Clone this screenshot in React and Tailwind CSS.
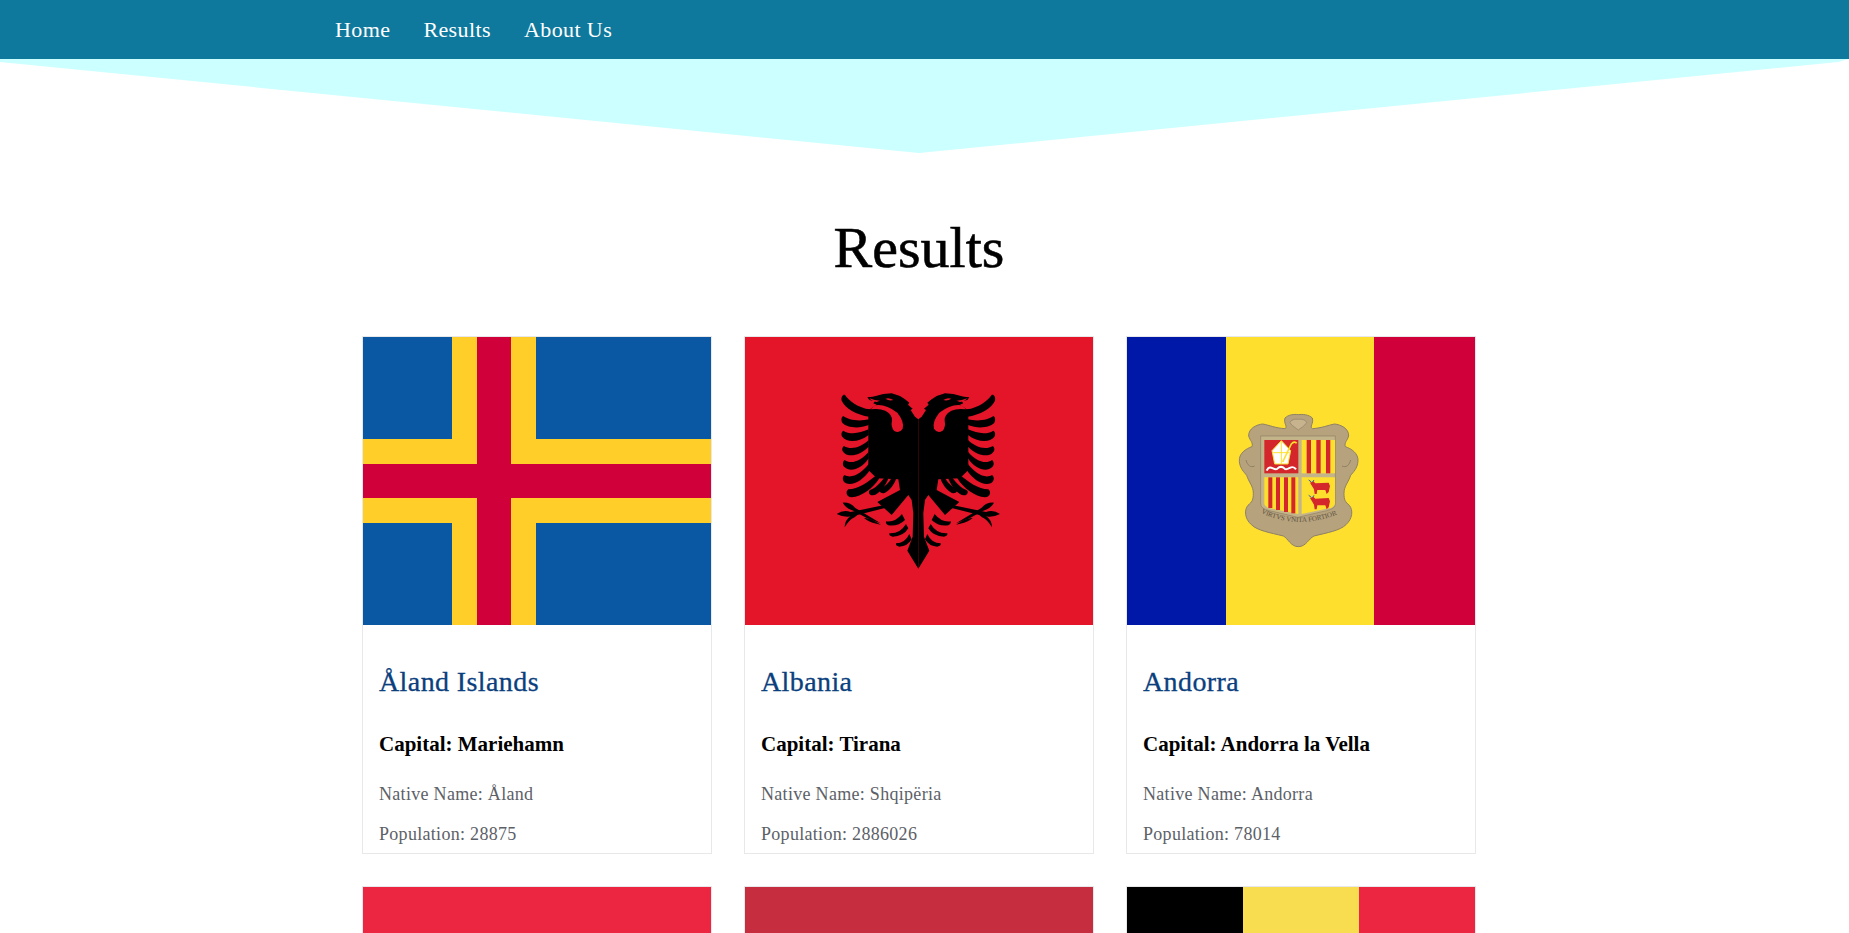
const SERIF = "font-['Liberation_Serif',serif]";

const countries = [
  { name: "Åland Islands", capital: "Mariehamn", native: "Åland", population: 28875, flag: <AlandFlag /> },
  { name: "Albania", capital: "Tirana", native: "Shqipëria", population: 2886026, flag: <AlbaniaFlag /> },
  { name: "Andorra", capital: "Andorra la Vella", native: "Andorra", population: 78014, flag: <AndorraFlag /> },
];

function AlandFlag() {
  return (
    <svg viewBox="0 0 348 288" preserveAspectRatio="none" className="block h-full w-full">
      <rect width="348" height="288" fill="#0a57a4" />
      <rect x="89" width="84" height="288" fill="#ffce29" />
      <rect y="102" width="348" height="84" fill="#ffce29" />
      <rect x="114" width="34" height="288" fill="#d0003a" />
      <rect y="127" width="348" height="34" fill="#d0003a" />
    </svg>
  );
}

// left half of the eagle, mirrored for the other side (coords are 3x)
function EagleHalf() {
  return (
    <g>
      <g fill="#000">
        {/* body, head and tail */}
        <path d="M295 118 L285 110 L272 90 L278 86 L264 74 L268 68 L255 58 L240 48 L215 40 L190 42 L170 47 L158 50 L142 52 L148 60 L165 64 L160 70 L170 74 L150 88 L145 90 L145 270 L170 295 L235 298 L240 330 L172 366 L215 405 L265 345 L275 360 L280 400 L278 470 L262 512 L295 566 Z" />
        {/* wing feathers */}
        <path d="M75 45 C85 60 115 85 150 88 L148 110 C110 105 75 85 65 62 C62 50 70 42 75 45 Z" />
        <path d="M70 108 C85 120 115 125 148 118 L146 135 C115 148 80 142 68 130 C62 122 64 110 70 108 Z" />
        <path d="M70 152 C90 165 120 160 146 148 L146 165 C118 188 80 188 68 172 C62 165 64 155 70 152 Z" />
        <path d="M72 198 C95 212 125 200 146 180 L146 200 C120 228 85 232 72 218 C64 212 66 202 72 198 Z" />
        <path d="M74 240 C95 255 125 240 146 215 L146 235 C125 268 90 278 74 262 C66 256 68 244 74 240 Z" />
        <path d="M74 285 C95 298 125 280 148 250 L150 270 C130 300 100 318 78 310 C66 304 66 290 74 285 Z" />
        <path d="M85 328 C115 328 145 305 170 285 L178 295 C160 325 125 350 95 352 C78 352 76 334 85 328 Z" />
        <path d="M150 330 C165 325 180 310 195 290 L205 296 C195 320 175 345 158 346 C146 346 144 335 150 330 Z" />
        <path d="M182 325 C195 320 205 310 215 294 L228 298 C220 320 200 340 190 340 C178 340 176 330 182 325 Z" />
        {/* tail feathers */}
        <path d="M198 424 Q225 428 246 402 L255 420 Q235 440 205 436 Q196 432 198 424 Z" />
        <path d="M208 460 Q240 462 258 432 L265 445 Q250 470 218 470 Q206 468 208 460 Z" />
        <path d="M228 490 Q255 490 268 462 L275 478 Q262 500 238 500 Q226 498 228 490 Z" />
        {/* claws and branches */}
        <path d="M50 402 Q70 388 92 396 L190 376 L195 384 L100 408 Q72 414 50 402 Z" />
        <path d="M68 368 Q90 366 106 384 L182 430 Q160 422 140 414 L100 392 Q78 386 68 368 Z" />
        <path d="M120 398 L104 412 Q90 416 74 442 Q74 420 92 408 Z" />
        <path d="M132 414 Q150 412 182 434 Q155 430 140 420 Z" />
      </g>
      {/* mouth, eye and neck opening */}
      <g fill="#e41529">
        <path d="M148 55 Q165 62 180 62 L170 66 Q155 64 148 55 Z" />
        <path d="M196 56 Q208 52 220 60 Q208 64 196 56 Z" />
        <path d="M165 76 Q195 70 232 98 Q254 125 248 146 Q238 162 222 152 Q212 140 216 122 Q218 104 196 92 Q178 84 152 88 Z" />
      </g>
    </g>
  );
}

function AlbaniaFlag() {
  return (
    <svg viewBox="0 0 348 288" preserveAspectRatio="none" className="block h-full w-full">
      <rect width="348" height="288" fill="#e41529" />
      <g transform="translate(75 43) scale(0.3333)">
        <EagleHalf />
        <g transform="translate(590 0) scale(-1 1)">
          <EagleHalf />
        </g>
      </g>
    </svg>
  );
}

function Cow({ y }) {
  return (
    <g transform={`translate(0 ${y})`}>
      <path
        d="M270 248 L280 244 L286 250 L326 248 L330 258 L326 276 L320 282 L316 270 L292 270 L290 282 L284 282 L282 268 L276 258 Z"
        fill="#d3272b"
      />
      <path d="M266 240 L274 246 M282 240 L278 246" stroke="#2b5fa8" strokeWidth="3" fill="none" />
    </g>
  );
}

function AndorraFlag() {
  return (
    <svg viewBox="0 0 348 288" preserveAspectRatio="none" className="block h-full w-full">
      <rect width="348" height="288" fill="#0018a8" />
      <rect x="99" width="148" height="288" fill="#fedf2e" />
      <rect x="247" width="101" height="288" fill="#d0003a" />
      <g transform="translate(93 63) scale(0.3333)">
        {/* cartouche */}
        <path
          d="M235 44 C222 42 205 44 195 54 C190 72 205 80 195 86 C165 84 150 76 128 72 C110 74 85 85 86 108 C90 122 100 128 96 140 C78 146 56 160 58 184 C60 206 72 216 80 226 C86 246 100 258 100 280 C100 300 96 306 84 316 C72 330 74 356 94 374 C112 392 150 398 190 408 C205 416 212 440 235 440 C258 440 266 416 282 408 C322 398 360 392 378 374 C398 356 400 330 388 316 C376 306 372 300 372 280 C372 258 386 246 392 226 C400 216 412 206 414 184 C416 160 394 146 376 140 C372 128 382 122 386 108 C387 85 362 74 344 72 C322 76 307 84 277 86 C267 80 282 72 277 54 C267 44 248 42 235 44 Z"
          fill="#b6a27d"
          stroke="#8e7f63"
          strokeWidth="3"
        />
        <path d="M235 58 C225 56 212 60 210 68 C216 78 228 84 235 90 C242 84 254 78 260 68 C258 60 245 56 235 58 Z" fill="#c7b38d" stroke="#8e7f63" strokeWidth="2" />
        <path d="M78 180 C82 196 92 204 104 198 M392 180 C388 196 378 204 366 198" stroke="#8e7f63" strokeWidth="3" fill="none" />
        {/* shield */}
        <path d="M122 108 L346 108 L346 312 Q346 326 320 332 L234 352 L148 332 Q122 326 122 312 Z" fill="#c4b48a" stroke="#8e7f63" strokeWidth="2" />
        <rect x="133" y="120" width="102" height="100" fill="#d3272b" />
        <rect x="245" y="120" width="100" height="100" fill="#fedf2e" />
        <path d="M133 232 L235 232 L235 342 L148 324 Q133 320 133 310 Z" fill="#fedf2e" />
        <path d="M245 232 L345 232 L345 310 Q345 320 330 324 L245 342 Z" fill="#fedf2e" />
        {/* pallets */}
        <g fill="#d3272b">
          <rect x="260" y="120" width="13" height="100" />
          <rect x="289" y="120" width="13" height="100" />
          <rect x="318" y="120" width="13" height="100" />
          <rect x="145" y="232" width="12" height="92" />
          <rect x="168" y="232" width="12" height="98" />
          <rect x="192" y="232" width="12" height="104" />
          <rect x="214" y="232" width="12" height="108" />
        </g>
        {/* mitre and crozier */}
        <path d="M184 122 L212 152 L204 192 L164 192 L156 152 Z" fill="#fff" stroke="#fedf2e" strokeWidth="3" />
        <path d="M184 124 L184 192 M160 158 L208 158" stroke="#fedf2e" strokeWidth="3" fill="none" />
        <path d="M188 186 L214 132 Q224 122 230 130" stroke="#fedf2e" strokeWidth="5" fill="none" />
        <path d="M140 212 C150 190 162 214 172 206 C180 198 186 198 194 206 C204 214 216 190 228 208" stroke="#fff" strokeWidth="6" fill="none" />
        {/* cows */}
        <Cow y={0} />
        <Cow y={46} />
        {/* motto */}
        <path id="motto" d="M118 336 Q235 396 370 336" fill="none" />
        <text fill="#5e5340" fontSize="21" fontFamily="Liberation Serif, serif">
          <textPath href="#motto" startOffset="2%">VIRTVS VNITA FORTIOR</textPath>
        </text>
      </g>
    </svg>
  );
}

function CountryCard({ country }) {
  return (
    <div className="h-[518px] overflow-hidden border border-[#e8e8ea] bg-white">
      <div className="h-[288px]">{country.flag}</div>
      <div className="px-4 pt-[39px]">
        <h3 className="text-[28px] leading-[36px] tracking-[0.4px] text-[#0b3f7e] [-webkit-text-stroke:0.3px_#0b3f7e]">{country.name}</h3>
        <h4 className="mt-[31px] text-[21px] leading-[26px] font-bold text-black">Capital: {country.capital}</h4>
        <p className="mt-[24px] text-[18px] leading-[26px] tracking-[0.3px] text-[#5c6167]">Native Name: {country.native}</p>
        <p className="mt-[14px] text-[18px] leading-[26px] tracking-[0.3px] text-[#5c6167]">Population: {country.population}</p>
      </div>
    </div>
  );
}

function PartialFlag({ children }) {
  return <div className="flex h-[120px] overflow-hidden border border-[#e8e8ea] bg-white">{children}</div>;
}

export default function App() {
  return (
    <div className={`h-[933px] overflow-hidden bg-white ${SERIF}`}>
      <nav className="flex h-[59px] items-center bg-[#0e799d] pl-[335px]">
        <ul className="flex gap-[33px] text-[22px] tracking-[0.4px] text-white">
          <li>Home</li>
          <li>Results</li>
          <li>About Us</li>
        </ul>
      </nav>
      <svg viewBox="0 0 1849 94" preserveAspectRatio="none" className="block h-[94px] w-full">
        <polygon points="0,0 1849,0 1838,3 919,94 0,3" fill="#ccffff" />
      </svg>
      <main className="w-[1838px]">
        <h1 className="mt-[59px] text-center text-[58px] leading-[72px] text-black [-webkit-text-stroke:0.6px_#000]">Results</h1>
        <div className="mx-auto mt-[52px] grid w-[1114px] grid-cols-3 gap-x-[32px] gap-y-[32px]">
          {countries.map((c) => (
            <CountryCard key={c.name} country={c} />
          ))}
          <PartialFlag>
            <div className="w-full bg-[#ec2540]" />
          </PartialFlag>
          <PartialFlag>
            <div className="w-full bg-[#c62e40]" />
          </PartialFlag>
          <PartialFlag>
            <div className="flex-1 bg-black" />
            <div className="flex-1 bg-[#f9dd50]" />
            <div className="flex-1 bg-[#ec2540]" />
          </PartialFlag>
        </div>
      </main>
    </div>
  );
}
